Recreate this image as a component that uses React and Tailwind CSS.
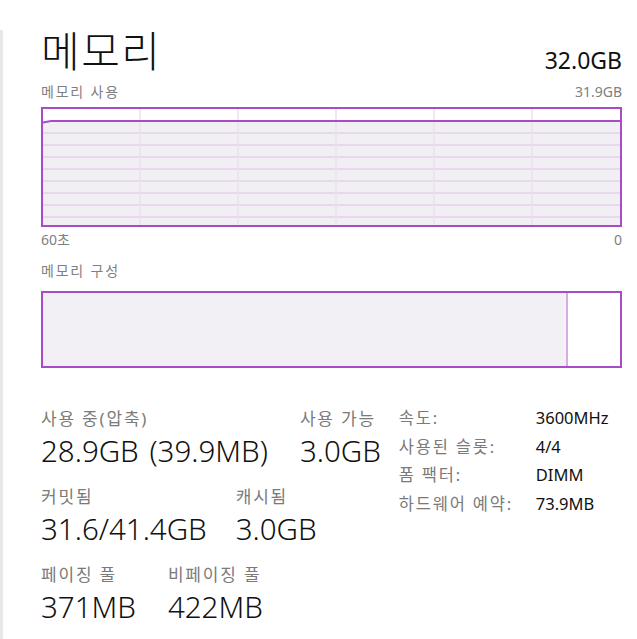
import React from 'react';

const font = { fontFamily: '"Noto Sans", "Noto Sans CJK KR", sans-serif' };

function UsageChart() {
  // inner area 577x116, grid 12px rows, 98px columns (scrolled)
  const w = 577;
  const h = 116;
  const cols = [97, 195, 293, 391, 489];
  const rows = [24, 36, 48, 60, 72, 84, 96, 108];
  return (
    <div className="h-[120px] w-full border-2 border-[#a64cc6] bg-white">
      <svg width="100%" height="100%" viewBox={`0 0 ${w} ${h}`} preserveAspectRatio="none" className="block">
        <path d={`M0 13.5 L8 12 L${w} 12 L${w} ${h} L0 ${h} Z`} fill="#f2eff4" />
        {rows.map((y) => (
          <line key={y} x1="0" x2={w} y1={y} y2={y} stroke="#e4d0ea" strokeWidth="1.3" />
        ))}
        {cols.map((x) => (
          <line key={x} x1={x} x2={x} y1="0" y2={h} stroke="#ecdff0" strokeWidth="1.5" />
        ))}
        <path d={`M0 13.5 L8 12 L${w} 12`} fill="none" stroke="#a64cc6" strokeWidth="2" />
      </svg>
    </div>
  );
}

function Stat({ label, value }) {
  return (
    <div className="flex flex-col">
      <span className="text-[17px] leading-[24px] tracking-[1.8px] text-[#7a7a7a]">{label}</span>
      <span className="mt-[2px] text-[29.5px] font-light leading-[36px] text-[#111] [word-spacing:3px]">{value}</span>
    </div>
  );
}

export default function App() {
  return (
    <div className="flex h-[639px] w-[637px] overflow-hidden bg-white" style={font}>
      <div className="mt-[30px] w-[3px] shrink-0 bg-[#e8e8e8]" />
      <div className="flex flex-1 flex-col pl-[38px] pr-[15px] pt-[24px]">
        <div className="flex items-end justify-between">
          <h1 className="mt-[2px] text-[42px] font-light leading-[50px] tracking-[1.5px] text-[#111]">메모리</h1>
          <span className="mb-[1px] text-[23px] leading-[30px] text-[#111]">32.0GB</span>
        </div>
        <div className="mt-[6px] flex justify-between text-[14px] leading-[20px] text-[#808080]">
          <span className="tracking-[1.8px]">메모리 사용</span>
          <span>31.9GB</span>
        </div>
        <div className="mt-[5px]">
          <UsageChart />
        </div>
        <div className="mt-[3px] flex justify-between text-[14px] leading-[20px] text-[#808080]">
          <span>60초</span>
          <span>0</span>
        </div>
        <div className="mt-[11px] text-[14px] leading-[20px] tracking-[1.8px] text-[#808080]">메모리 구성</div>
        <div className="mt-[10px] flex h-[77px] border-2 border-[#a64cc6] bg-white">
          <div className="w-[523px] bg-[#f2f0f4]" />
          <div className="w-[2px] bg-[#d8abe2]" />
          <div className="flex-1 bg-white" />
        </div>
        <div className="mt-[39px] flex gap-[18px]">
          <div className="flex flex-col gap-[16px]">
            <div className="flex gap-[32px]">
              <Stat label="사용 중(압축)" value="28.9GB (39.9MB)" />
              <Stat label="사용 가능" value="3.0GB" />
            </div>
            <div className="flex gap-[29px]">
              <Stat label="커밋됨" value="31.6/41.4GB" />
              <Stat label="캐시됨" value="3.0GB" />
            </div>
            <div className="flex gap-[32px]">
              <Stat label="페이징 풀" value="371MB" />
              <Stat label="비페이징 풀" value="422MB" />
            </div>
          </div>
          <div className="-mt-[1px] grid grid-cols-[137px_auto] content-start gap-y-[5px] text-[16.5px] leading-[23.5px]">
            <span className="tracking-[1.8px] text-[#7a7a7a]">속도:</span>
            <span className="text-[#111]">3600MHz</span>
            <span className="tracking-[1.8px] text-[#7a7a7a]">사용된 슬롯:</span>
            <span className="text-[#111]">4/4</span>
            <span className="tracking-[1.8px] text-[#7a7a7a]">폼 팩터:</span>
            <span className="text-[#111]">DIMM</span>
            <span className="tracking-[1.8px] text-[#7a7a7a]">하드웨어 예약:</span>
            <span className="text-[#111]">73.9MB</span>
          </div>
        </div>
      </div>
    </div>
  );
}
